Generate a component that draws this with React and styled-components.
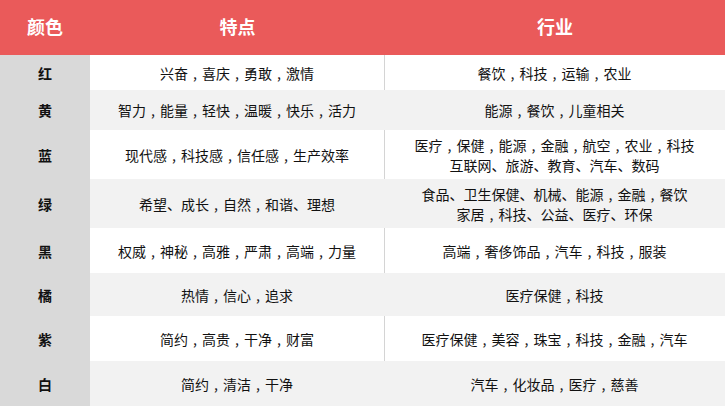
import React from "react";
import styled, { createGlobalStyle } from "styled-components";

const GlobalStyle = createGlobalStyle`
  html, body {
    margin: 0;
    padding: 0;
    background: #ffffff;
  }
  body {
    font-family: "Noto Sans CJK SC", "Noto Sans", sans-serif;
  }
`;

const rows = [
  { color: "红", traits: ["兴奋，喜庆，勇敢，激情"], fields: ["餐饮，科技，运输，农业"], h: 35 },
  { color: "黄", traits: ["智力，能量，轻快，温暖，快乐，活力"], fields: ["能源，餐饮，儿童相关"], h: 40 },
  {
    color: "蓝",
    traits: ["现代感，科技感，信任感，生产效率"],
    fields: ["医疗，保健，能源，金融，航空，农业，科技", "互联网、旅游、教育、汽车、数码"],
    h: 49,
  },
  {
    color: "绿",
    traits: ["希望、成长，自然，和谐、理想"],
    fields: ["食品、卫生保健、机械、能源，金融，餐饮", "家居，科技、公益、医疗、环保"],
    h: 49,
  },
  { color: "黑", traits: ["权威，神秘，高雅，严肃，高端，力量"], fields: ["高端，奢侈饰品，汽车，科技，服装"], h: 45 },
  { color: "橘", traits: ["热情，信心，追求"], fields: ["医疗保健，科技"], h: 43 },
  { color: "紫", traits: ["简约，高贵，干净，财富"], fields: ["医疗保健，美容，珠宝，科技，金融，汽车"], h: 45 },
  { color: "白", traits: ["简约，清洁，干净"], fields: ["汽车，化妆品，医疗，慈善"], h: 45 },
];

// the comma sits in the middle of its box in the original, so draw it that way
function Text({ value }) {
  const parts = value.split("，");
  return (
    <Line>
      {parts.map((p, i) => (
        <React.Fragment key={i}>
          {i > 0 && <Comma>,</Comma>}
          {p}
        </React.Fragment>
      ))}
    </Line>
  );
}

export default function App() {
  return (
    <>
      <GlobalStyle />
      <Table>
        <Header>
          <HeadCell>颜色</HeadCell>
          <HeadCell>特点</HeadCell>
          <HeadCell>行业</HeadCell>
        </Header>
        {rows.map((r, i) => (
          <Row key={r.color} $height={r.h}>
            <ColorCell>{r.color}</ColorCell>
            <Cell $striped={i % 2 === 1} $divider>
              {r.traits.map((t) => (
                <Text key={t} value={t} />
              ))}
            </Cell>
            <Cell $striped={i % 2 === 1}>
              {r.fields.map((t) => (
                <Text key={t} value={t} />
              ))}
            </Cell>
          </Row>
        ))}
      </Table>
    </>
  );
}

const Table = styled.div`
  width: 725px;
  display: flex;
  flex-direction: column;
`;

const Header = styled.div`
  display: grid;
  grid-template-columns: 90px 295px 1fr;
  height: 55px;
  background: #ea5a5a;
`;

const HeadCell = styled.div`
  display: flex;
  align-items: center;
  justify-content: center;
  color: #ffffff;
  font-size: 18px;
  font-weight: 700;
  padding-bottom: 3px;
`;

const Row = styled.div`
  display: grid;
  grid-template-columns: 90px 295px 1fr;
  height: ${(p) => p.$height}px;
`;

const ColorCell = styled.div`
  display: flex;
  align-items: center;
  justify-content: center;
  background: #d9d9d9;
  color: #111111;
  font-size: 14px;
  font-weight: 700;
`;

const Cell = styled.div`
  display: flex;
  flex-direction: column;
  align-items: center;
  justify-content: center;
  background: ${(p) => (p.$striped ? "#f2f2f2" : "#ffffff")};
  border-right: 1px solid
    ${(p) => (p.$divider && !p.$striped ? "#d4d4d4" : "transparent")};
  color: #111111;
  font-size: 14px;
`;

const Line = styled.div`
  line-height: 20px;
  white-space: nowrap;
`;

const Comma = styled.span`
  display: inline-block;
  width: 14px;
  text-align: center;
`;
